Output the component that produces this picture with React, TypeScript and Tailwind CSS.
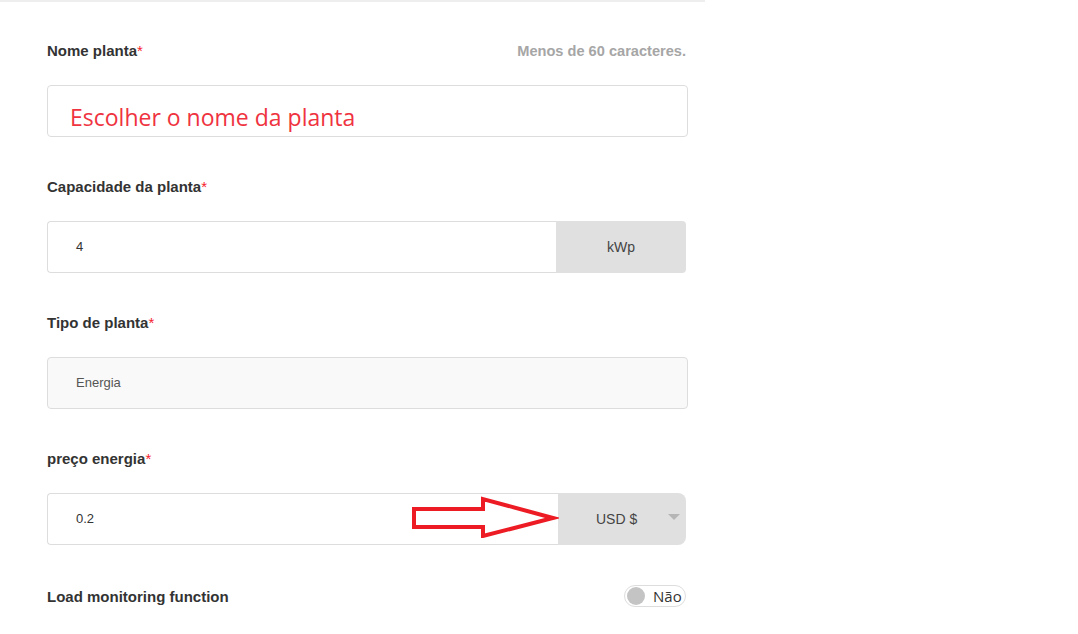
import React from "react";

const Label = ({ children, right }: { children: React.ReactNode; right?: React.ReactNode }) => (
  <div className="flex items-center justify-between h-[20px] pt-[3px]">
    <div className="text-[15px] font-bold text-[#333]">
      {children}
      <span className="text-[#f5222d] font-normal">*</span>
    </div>
    {right}
  </div>
);

export default function App() {
  return (
    <div className="w-[1078px] h-[634px] bg-white overflow-hidden" style={{ fontFamily: '"Liberation Sans", Arial, sans-serif' }}>
      <div className="w-[705px] border-t-2 border-[#eeeeee] pl-[47px] pr-[17px] pt-[38px]">
        {/* Nome planta */}
        <Label right={<div className="text-[14.6px] font-bold text-[#a6a6a6] mr-[2px]">Menos de 60 caracteres.</div>}>Nome planta</Label>
        <div className="mt-[25px] h-[52px] border border-[#dddddd] rounded-[4px] bg-white flex items-center pl-[22px]">
          <span className="text-[23px] text-[#ef3340] mt-[12px]" style={{ fontFamily: '"Open Sans", sans-serif' }}>Escolher o nome da planta</span>
        </div>

        {/* Capacidade */}
        <div className="mt-[39px]">
          <Label>Capacidade da planta</Label>
        </div>
        <div className="mt-[25px] h-[52px] w-[639px] flex rounded-[4px]">
          <div className="flex-1 border border-[#dddddd] border-r-0 rounded-l-[4px] flex items-center pl-[28px] text-[13px] text-[#333]">4</div>
          <div className="w-[130px] bg-[#e0e0e0] rounded-r-[4px] flex items-center justify-center text-[14px] text-[#444]">kWp</div>
        </div>

        {/* Tipo */}
        <div className="mt-[39px]">
          <Label>Tipo de planta</Label>
        </div>
        <div className="mt-[25px] h-[52px] border border-[#dddddd] rounded-[4px] bg-[#f9f9f9] flex items-center pl-[28px] text-[13px] text-[#555]">
          Energia
        </div>

        {/* preço energia */}
        <div className="mt-[39px]">
          <Label>preço energia</Label>
        </div>
        <div className="relative mt-[25px] h-[52px] w-[639px] flex rounded-[6px]">
          <div className="flex-1 border border-[#dddddd] border-r-0 rounded-l-[4px] flex items-center pl-[28px] text-[13px] text-[#333]">0.2</div>
          <div className="w-[128px] bg-[#e0e0e0] rounded-r-[8px] flex items-center relative">
            <span className="ml-[38px] text-[14px] text-[#444]">USD $</span>
            <svg className="absolute right-[6px] top-[21px]" width="12" height="7" viewBox="0 0 12 7">
              <path d="M0 0 L12 0 L6 6 Z" fill="#b5b5b5" />
            </svg>
          </div>
          <svg className="absolute left-[364px] top-[1px]" width="148" height="44" viewBox="0 0 148 44">
            <path
              d="M3 17 L72 17 L72 7 L142 26 L72 44 L72 35 L3 35 Z"
              transform="translate(0,-2)"
              fill="none"
              stroke="#ed1c24"
              strokeWidth="4"
              strokeLinejoin="miter"
            />
          </svg>
        </div>

        {/* Load monitoring */}
        <div className="mt-[39px] flex items-center justify-between h-[24px]">
          <div className="text-[15px] font-bold text-[#333] pt-[2px]">Load monitoring function</div>
          <div className="mr-[2px] h-[22px] w-[62px] rounded-full border border-[#dddddd] flex items-center pl-[2px]">
            <span className="w-[18px] h-[18px] rounded-full bg-[#c4c4c4]" />
            <span className="ml-[8px] text-[15px] text-[#333]" style={{ fontFamily: '"Open Sans", sans-serif' }}>Não</span>
          </div>
        </div>
      </div>
    </div>
  );
}
